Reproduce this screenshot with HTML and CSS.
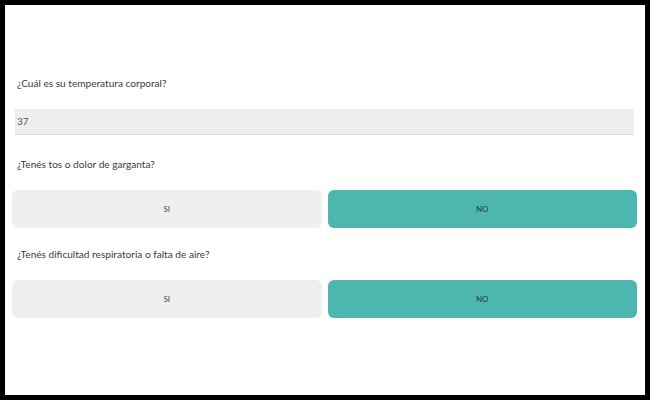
FILE: index.html
```html
<!DOCTYPE html>
<html lang="es">
<head>
<meta charset="utf-8">
<link rel="stylesheet" href="styles.css">
</head>
<body>
<div class="screen">
  <div class="form">
    <label class="q q-first">¿Cuál es su temperatura corporal?</label>
    <div class="field">37</div>
    <label class="q">¿Tenés tos o dolor de garganta?</label>
    <div class="choices">
      <button class="btn">SI</button>
      <button class="btn btn-active">NO</button>
    </div>
    <label class="q">¿Tenés dificultad respiratoria o falta de aire?</label>
    <div class="choices">
      <button class="btn">SI</button>
      <button class="btn btn-active">NO</button>
    </div>
  </div>
</div>
</body>
</html>
```

FILE: styles.css
```css
html, body {
  margin: 0;
  padding: 0;
  background: #000;
  width: 650px;
  height: 400px;
  overflow: hidden;
}
.screen {
  margin: 5px;
  width: 640px;
  height: 390px;
  background: #fff;
  font-family: "Lato", "Noto Sans", sans-serif;
  color: #3a3a3a;
}
.form {
  display: flex;
  flex-direction: column;
  padding: 70px 8px 0 7px;
}
.q {
  display: block;
  font-size: 10.1px;
  line-height: 16px;
  height: 16px;
  margin: 18px 0 18px 5px;
}
.q-first {
  margin-top: 0;
}
.field {
  margin: 0 3px 0 3px;
  height: 25px;
  line-height: 25px;
  background: #eeeeee;
  border-bottom: 1px solid #d8d8d8;
  padding-left: 2px;
  font-size: 10px;
  color: #555;
}
.field + .q {
  margin-top: 21px;
}
.choices {
  display: flex;
  gap: 6px;
}
.btn {
  flex: 1;
  height: 38px;
  border: none;
  border-radius: 6px;
  background: #efefef;
  font-family: "Lato", "Noto Sans", sans-serif;
  font-size: 8px;
  color: #444;
  padding: 0;
}
.btn-active {
  background: #4db6ae;
  color: #24403d;
}
```
